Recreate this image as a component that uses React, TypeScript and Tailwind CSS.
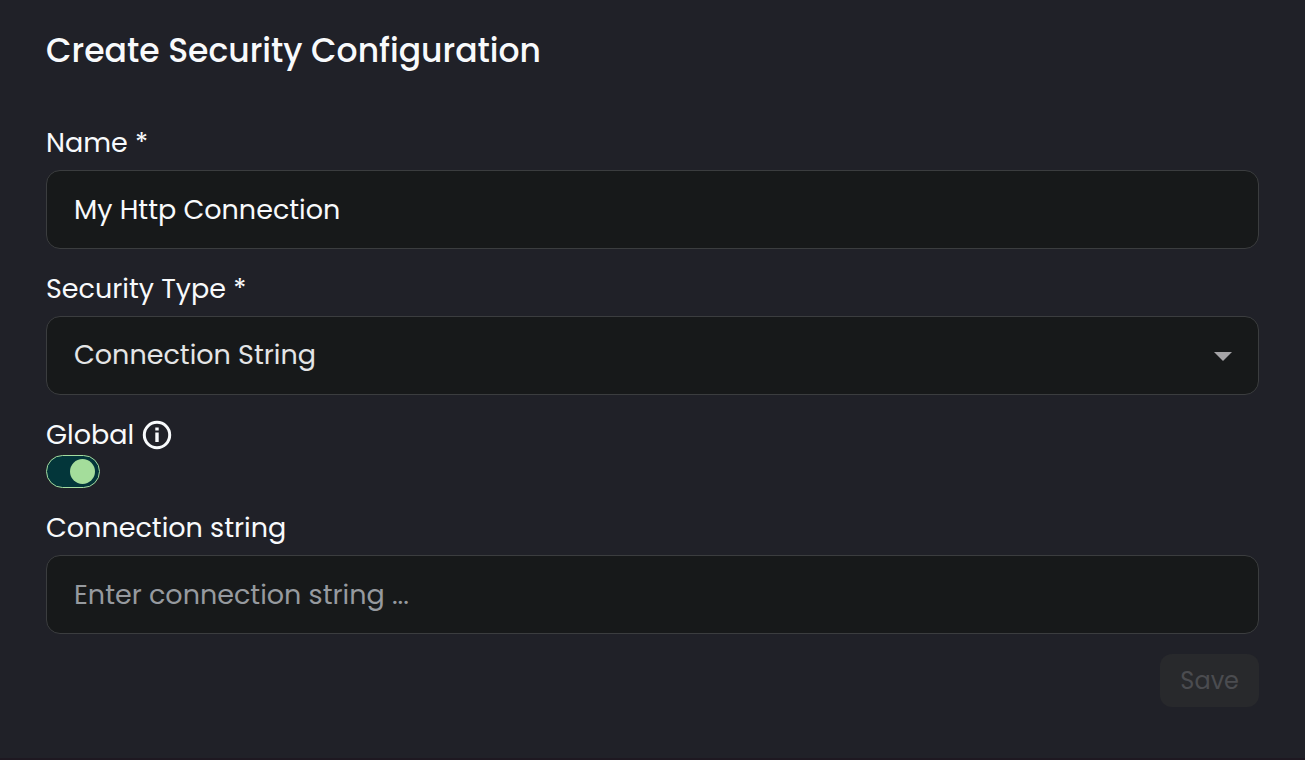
import { useState } from "react";

const labelClass = "text-[27px] leading-10 text-[#f8fafc]";
const fieldClass =
  "h-[79px] w-full rounded-[14px] border border-[#3b3d3f] bg-[#17191a] px-[27px] text-[27px] outline-none";

export default function App() {
  const [name, setName] = useState("My Http Connection");
  const [type, setType] = useState("Connection String");
  const [isGlobal, setIsGlobal] = useState(true);
  const [connection, setConnection] = useState("");

  return (
    <main className="min-h-screen border-b-2 border-[#1e1821] bg-[#202128] px-[46px] pt-[26px] pb-12 font-['Poppins','Inter',sans-serif]">
      <h1 className="text-[33px] leading-[49px] font-medium text-[#f8fafc]">Create Security Configuration</h1>
      <form className="mt-12 flex flex-col gap-5" onSubmit={(e) => e.preventDefault()}>
        <div className="flex flex-col gap-[7px]">
          <label htmlFor="name" className={labelClass}>Name *</label>
          <input
            id="name"
            type="text"
            value={name}
            onChange={(e) => setName(e.target.value)}
            className={`${fieldClass} text-[#f8fafc]`}
          />
        </div>
        <div className="flex flex-col gap-[7px]">
          <label htmlFor="type" className={labelClass}>Security Type *</label>
          <div className="relative">
            <select
              id="type"
              value={type}
              onChange={(e) => setType(e.target.value)}
              className={`${fieldClass} block appearance-none text-[#e4e5e6]`}
            >
              <option>Connection String</option>
            </select>
            <svg
              viewBox="0 0 18 9"
              className="pointer-events-none absolute top-[36px] right-[27px] h-[9px] w-[18px] fill-[#a5a4a7]"
              aria-hidden="true"
            >
              <path d="M0 0h18L9 9z" />
            </svg>
          </div>
        </div>
        <div className="flex flex-col items-start">
          <div className="flex items-center gap-2">
            <label htmlFor="global" className={labelClass}>Global</label>
            <svg viewBox="0 0 30 30" className="size-[30px]" aria-hidden="true">
              <circle cx="15" cy="15" r="12.7" fill="none" stroke="#f8fafc" strokeWidth="3" />
              <path d="M13.3 7.5h3.4v3h-3.4zM13.3 12.5h3.4v9.5h-3.4z" fill="#f8fafc" />
            </svg>
          </div>
          <div className="relative h-[33px] w-[54px]">
            <input
              id="global"
              type="checkbox"
              role="switch"
              checked={isGlobal}
              onChange={(e) => setIsGlobal(e.target.checked)}
              className="peer block h-full w-full cursor-pointer appearance-none rounded-full border border-[#a4dda0] bg-[#03363a]"
            />
            <span className="pointer-events-none absolute top-1 left-1 size-[25px] rounded-full bg-[#a4dd9b] peer-checked:left-6" />
          </div>
        </div>
        <div className="flex flex-col gap-[7px]">
          <label htmlFor="connection" className={labelClass}>Connection string</label>
          <input
            id="connection"
            type="text"
            value={connection}
            placeholder="Enter connection string ..."
            onChange={(e) => setConnection(e.target.value)}
            className={`${fieldClass} text-[#f8fafc] placeholder:text-[#969a9f]`}
          />
        </div>
        <button
          type="submit"
          disabled
          className="h-[53px] self-end rounded-[12px] bg-[#28292c] px-5 text-[24px] leading-8 text-[#4b4c50]"
        >
          Save
        </button>
      </form>
    </main>
  );
}
